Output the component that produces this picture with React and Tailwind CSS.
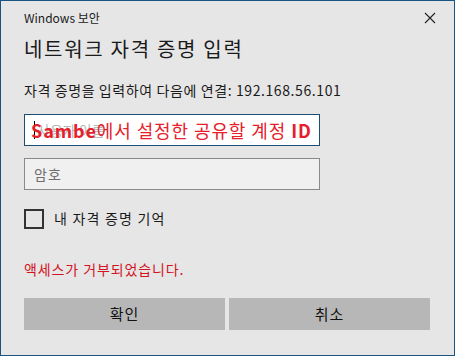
import React from 'react';

const font = { fontFamily: '"Noto Sans CJK KR", "Noto Sans", sans-serif' };

export default function App() {
  return (
    <div
      className="w-[455px] h-[356px] bg-[#e6e6e6] border border-[#195583] flex flex-col text-[#1a1a1a] overflow-hidden"
      style={font}
    >
      {/* Title bar */}
      <div className="flex items-center justify-between h-[32px] pl-[23px] pr-[17px] pt-[1px]">
        <span className="text-[12px] leading-none">Windows 보안</span>
        <svg width="12" height="12" viewBox="0 0 12 12" className="mr-[1px]">
          <path d="M1 1 L11 11 M11 1 L1 11" stroke="#222" strokeWidth="1.1" />
        </svg>
      </div>

      <div className="px-[23px] flex flex-col">
        <h1 className="text-[20px] leading-none mt-[4px] h-[24px] flex items-center tracking-[1.7px]">
          네트워크 자격 증명 입력
        </h1>

        <p className="text-[14px] leading-none mt-[21px] h-[16px] flex items-center tracking-[0.6px] whitespace-nowrap">
          자격 증명을 입력하여 다음에 연결: 192.168.56.101
        </p>

        {/* Username */}
        <div className="relative mt-[16px] w-[296px] h-[32px] bg-white border border-[#1b4f78] flex items-center pl-[9px]">
          <span className="w-px h-[18px] bg-black" />
          <span className="ml-[2px] text-[14px] text-[#b8b8b8]">사용자 이름</span>
          <span className="absolute left-[6px] top-0 h-full flex items-center text-[18px] text-[#e5202a] whitespace-nowrap leading-none tracking-[0.9px]">
            <b className="font-bold">Sambe</b>
            <span>에서 설정한 공유할 계정 </span>
            <b className="font-bold ml-[5px]">ID</b>
          </span>
        </div>

        {/* Password */}
        <div className="mt-[12px] w-[296px] h-[32px] bg-[#f0f0f0] border border-[#8a8a8a] flex items-center pl-[9px]">
          <span className="text-[14px] text-[#6e6e6e] tracking-[1px]">암호</span>
        </div>

        {/* Remember */}
        <label className="mt-[18px] flex items-center gap-[10px]">
          <span className="w-[20px] h-[20px] border-2 border-[#333] bg-transparent" />
          <span className="text-[14px] tracking-[1.2px]">내 자격 증명 기억</span>
        </label>

        <p className="mt-[32px] text-[14px] text-[#d2141e] leading-none h-[16px] flex items-center tracking-[0.9px]">
          액세스가 거부되었습니다.
        </p>

        <div className="mt-[21px] flex gap-[4px]">
          <button className="w-[201px] h-[32px] bg-[#b7b7b7] text-[15px] text-[#111] tracking-[1px]">확인</button>
          <button className="w-[201px] h-[32px] bg-[#b7b7b7] text-[15px] text-[#111] tracking-[1px]">취소</button>
        </div>
      </div>
    </div>
  );
}
